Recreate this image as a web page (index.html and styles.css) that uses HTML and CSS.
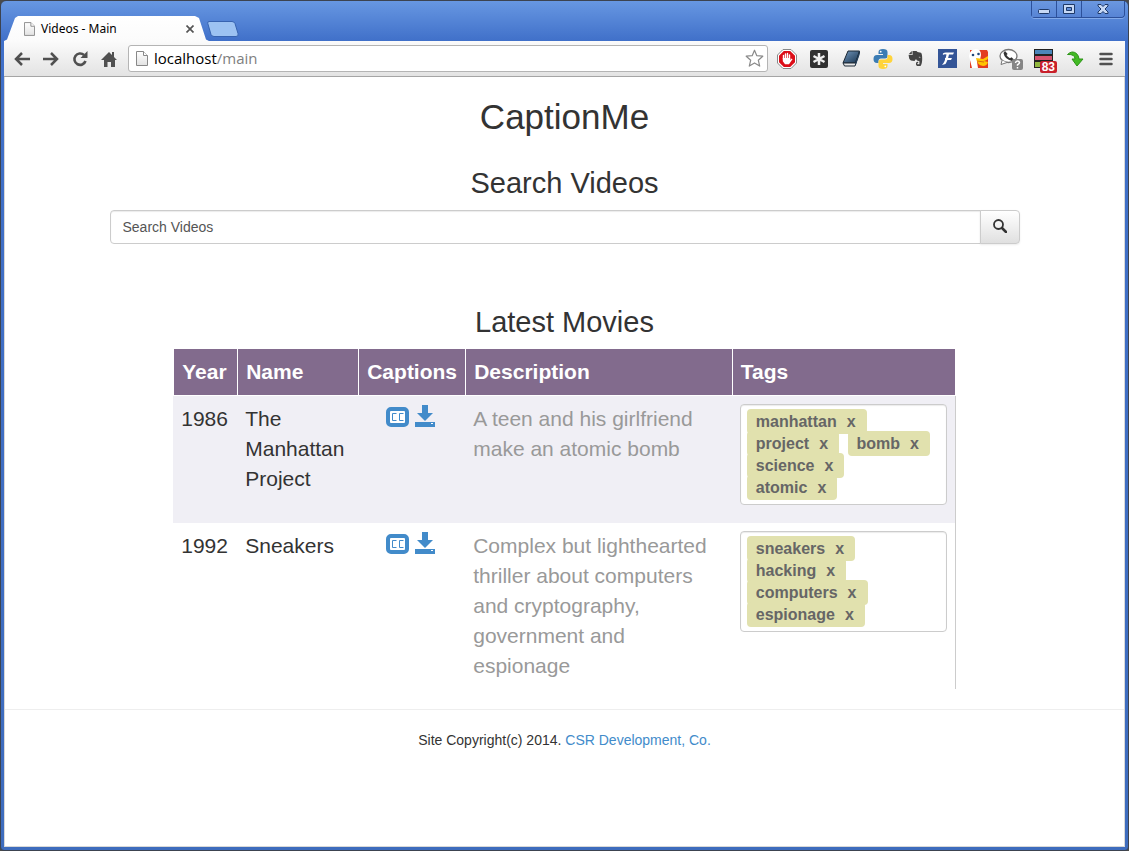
FILE: index.html
```html
<!DOCTYPE html>
<html lang="en">
<head>
<meta charset="utf-8">
<meta name="viewport" content="width=device-width, initial-scale=1">
<title>Videos - Main</title>
<link rel="stylesheet" href="styles.css">
</head>
<body>
<svg class="defs" width="0" height="0" aria-hidden="true">
  <defs>
    <linearGradient id="sheet" x1="0" y1="0" x2="0" y2="1"><stop offset="0" stop-color="#fff"/><stop offset="1" stop-color="#e2e2e2"/></linearGradient>
    <linearGradient id="book" x1="0" y1="0" x2="1" y2="1"><stop offset="0" stop-color="#7398bd"/><stop offset="1" stop-color="#17334f"/></linearGradient>
    <symbol id="page" viewBox="0 0 12 15"><path d="M.5.5h7l4 4v10H.5z" fill="url(#sheet)" stroke="#888"/><path d="M7.500.5v4h4" fill="#fff" stroke="#888"/></symbol>
    <symbol id="cc" viewBox="0 0 23 20"><rect x="2" y="2" width="19" height="16" rx="3" fill="#fff" stroke="#428bca" stroke-width="4"/><path d="M10.500 6.500h-4v7h4M17.500 6.500h-4v7h4" fill="none" stroke="#428bca" stroke-width="1"/></symbol>
    <symbol id="download" viewBox="0 0 20 22"><path fill="#428bca" d="M7 0h6v8h5l-8 8-8-8h5zM0 17h20v5H0z"/><path fill="#fff" d="M16 18h2v1h-2z"/></symbol>
  </defs>
</svg>
<div class="window">
  <header class="titlebar">
    <div class="tab">
      <svg width="11" height="14"><use href="#page"/></svg>
      <span class="tab-title">Videos - Main</span>
      <button class="plain tab-close" aria-label="Close tab"><svg width="8" height="8" viewBox="0 0 8 8"><path d="M.5.5l7 7M7.500.5l-7 7" stroke="#555" stroke-width="1.700"/></svg></button>
    </div>
    <button class="plain new-tab" aria-label="New tab"><svg width="32" height="17" viewBox="0 0 32 17"><path d="M2 .5h23q2 0 3 2l3 10q1 3-2 3H7q-2 0-3-2L.8 2.500Q.3.500 2 .500z" fill="#9cc2f2" stroke="#3763b0"/></svg></button>
    <div class="window-controls">
      <button class="control" aria-label="Minimize"><svg width="12" height="12" viewBox="0 0 12 12"><rect x=".5" y="6.500" width="11" height="4" rx="1" fill="#c6d8f5" stroke="#1e3968"/></svg></button>
      <button class="control" aria-label="Maximize"><svg width="12" height="12" viewBox="0 0 12 12"><path d="M.5 1.500h11v9H.5zM3.500 4.500v3h5v-3z" fill-rule="evenodd" fill="#c6d8f5" stroke="#1e3968"/></svg></button>
      <button class="control control-close" aria-label="Close"><svg width="12" height="12" viewBox="0 0 12 12"><path d="M1 1.500h3l2 2 2-2h3v1.500L8 6l3 3v1.500H8l-2-2-2 2H1V9l3-3-3-3z" fill="#c6d8f5" stroke="#1e3968"/></svg></button>
    </div>
  </header>

  <nav class="toolbar" aria-label="Browser">
    <button class="plain nav-button" aria-label="Back"><svg width="16" height="14" viewBox="0 0 16 14"><path d="M8 1L2 7l6 6M2 7h14" fill="none" stroke="#505050" stroke-width="2.500"/></svg></button>
    <button class="plain nav-button" aria-label="Forward"><svg width="16" height="14" viewBox="0 0 16 14"><path d="M8 1l6 6-6 6M14 7H0" fill="none" stroke="#505050" stroke-width="2.500"/></svg></button>
    <button class="plain nav-button" aria-label="Reload"><svg width="16" height="16" viewBox="0 0 16 16"><path d="M12 4a5.700 5.700 0 1 0 1.500 6" fill="none" stroke="#505050" stroke-width="2.600"/><path d="M15.500 0v7h-7z" fill="#505050"/></svg></button>
    <button class="plain nav-button" aria-label="Home"><svg width="16" height="16" viewBox="0 0 16 16"><path d="M8 1l3 3V1h2v5l3 3h-2v7h-4v-5H6.500v5H3V9H0z" fill="#505050"/></svg></button>
    <div class="address">
      <svg width="12" height="15"><use href="#page"/></svg>
      <span class="url">localhost<span class="url-path">/main</span></span>
      <button class="plain" aria-label="Bookmark"><svg width="19" height="19" viewBox="0 0 19 19"><path d="M9.500 1.200l2.300 5.500 6 .500-4.500 4 1.400 5.900-5.200-3.200-5.200 3.200 1.400-5.900-4.500-4 6-.500z" fill="#fff" stroke="#8a8a8a" stroke-width="1.200" stroke-linejoin="round"/></svg></button>
    </div>
    <button class="plain extension" aria-label="Ad blocker"><svg width="20" height="20" viewBox="0 0 20 20"><path d="M6 .5h8L19.500 6v8L14 19.500H6L.5 14V6z" fill="#fff" stroke="#888"/><path d="M6.800 2h6.400L18 6.800v6.400L13.200 18H6.800L2 13.200V6.800z" fill="#dc0d17"/><path d="M6.500 10V6.500M8.500 10V5M10.500 10V4.500M12.500 10V6" stroke="#fff" stroke-width="1.400" stroke-linecap="round"/><path d="M5.800 9h7.400v2l1.500-1.500.8.800-3.500 5H8l-2.200-3z" fill="#fff"/></svg></button>
    <button class="plain extension" aria-label="Notes"><svg width="18" height="18" viewBox="0 0 18 18"><rect width="18" height="18" rx="2" fill="#303030"/><path d="M9 3v12M3.500 6l11 6M14.500 6l-11 6" stroke="#eee" stroke-width="2.500"/></svg></button>
    <button class="plain extension" aria-label="Dictionary"><svg width="18" height="18" viewBox="0 0 18 18"><path d="M6 1h11.500l-4 12H1z" fill="url(#book)" stroke="#1d2935"/><path d="M1 13l1.500 3H13l4.500-14-4 11z" fill="#e7e7e7" stroke="#1d2935"/><path d="M13.500 13l4-12v4l-4 11z" fill="#22405e"/></svg></button>
    <button class="plain extension" aria-label="Python"><svg width="20" height="20" viewBox="0 0 20 20"><path d="M5.500 3Q5.500 0 10 0t4.500 3v4q0 2.500-2.500 2.500H8Q5.500 9.500 5.500 12v2H4Q.5 14 .5 10T4 6h6V5H5.500z" fill="#3b7cb4"/><path d="M14.500 17q0 3-4.500 3t-4.500-3v-4q0-2.500 2.500-2.500h4q2.500 0 2.500-2.500V6H16q3.500 0 3.500 4T16 14h-6v1h4.500z" fill="#ffd43b"/><circle cx="7.700" cy="2.700" r=".9" fill="#fff"/><circle cx="12.300" cy="17.300" r=".9" fill="#fff"/></svg></button>
    <button class="plain extension" aria-label="Clipper"><svg width="15" height="17" viewBox="0 0 15 17"><path d="M4.500 1h4l1 1 3.500.7q1.200.8 1.200 6T12.500 16H9q-1.500-1-1-3 .6-1.500 2.200-1.300V13h-.8v1.200h2v-3L9 10.500 8 9 6.500 11Q2 11 1.200 8.500L.6 5h4z" fill="#454545"/><path d="M3.800 1v3.200H.6z" fill="#454545"/><path d="M10.500 7q1.500-1 2 1z" fill="#eee"/></svg></button>
    <button class="plain extension" aria-label="Fonts"><svg width="19" height="19" viewBox="0 0 19 19"><rect width="19" height="19" fill="#345597"/><path d="M5 6Q4 3.500 8 3.500h8l-1 2h-4Q9.500 12 7.500 15L4 16q3-3 4.500-10.500Q6 5 5 6zM7 9h7l-1 2H7z" fill="#fff"/></svg></button>
    <button class="plain extension" aria-label="Duck search"><svg width="20" height="20" viewBox="0 0 20 20"><path d="M1 1h17l1 2v16H1z" fill="#e33b20"/><path d="M0 7Q1 0 7 0q5 0 5 6l-1 5-3 2 1 6H3z" fill="#fff"/><path d="M7 9l7 1L19 7q1 4-4 5l4 1q-1 4-5 4-6-1-7-8z" fill="#ffc400"/><path d="M8 12l7 1" stroke="#d66a10"/><circle cx="4" cy="6" r="1.300" fill="#234779"/><circle cx="9.500" cy="5" r="1.300" fill="#234779"/></svg></button>
    <button class="plain extension" aria-label="Phone"><svg width="24" height="22" viewBox="0 0 24 22"><ellipse cx="9.500" cy="8" rx="8.500" ry="6.500" fill="#fff" stroke="#777" stroke-width="1.300"/><path d="M3 12.500l-1 4 6-2" fill="#fff" stroke="#777"/><path d="M6 3L4.500 5q1 6 8.500 8l2-1.500-2.500-2.300-1.500 1Q8.500 9 7.500 7L8.700 6z" fill="#333"/><rect x="13" y="11" width="11" height="11" rx="2" fill="#858585"/><path d="M16.500 15q.3-2 2-2t2 1.500q0 1-2 2.300v1M18.500 19v1.500" fill="none" stroke="#fff" stroke-width="1.500"/></svg></button>
    <button class="plain extension badge-host" aria-label="Feeds, 83 unread"><svg width="19" height="19" viewBox="0 0 19 19"><path fill="#222" d="M0 0h19v19H0z"/><path fill="#4c86bb" d="M1 1h17v4H1z"/><path fill="#d75370" d="M1 7h17v4H1z"/><path fill="#91b83f" d="M1 13h17v5H1z"/></svg><span class="badge">83</span></button>
    <button class="plain extension" aria-label="Downloads"><svg width="17" height="16" viewBox="0 0 17 16"><path d="M.5 3.500Q5-1 9.500 2.500 12 5 12 8h4l-6 7-5-7h3Q8 3 .5 3.500z" fill="#43ba25" stroke="#2c9417"/></svg></button>
    <button class="plain menu-button" aria-label="Menu"><svg width="14" height="14" viewBox="0 0 14 14"><path d="M1.500 2h11M1.500 7h11M1.500 12h11" stroke="#505050" stroke-width="2.500" stroke-linecap="round"/></svg></button>
  </nav>

  <div class="page">
    <main class="container">
      <h1>CaptionMe</h1>
      <h2>Search Videos</h2>
      <form class="search" role="search">
        <input class="search-field" type="text" placeholder="Search Videos" aria-label="Search Videos">
        <button class="search-button" type="button" aria-label="Search"><svg width="14" height="14" viewBox="0 0 14 14"><circle cx="5.500" cy="5.500" r="4.500" fill="none" stroke="#333" stroke-width="1.800"/><path d="M9 9l4 4" stroke="#333" stroke-width="2.500" stroke-linecap="round"/></svg></button>
      </form>
      <h2 class="latest">Latest Movies</h2>
      <table class="movies">
        <colgroup><col class="col-year"><col class="col-name"><col class="col-captions"><col><col class="col-tags"></colgroup>
        <thead><tr><th>Year</th><th>Name</th><th>Captions</th><th>Description</th><th>Tags</th></tr></thead>
        <tbody>
          <tr>
            <td>1986</td><td>The Manhattan Project</td>
            <td><div class="captions"><a href="#" aria-label="View captions"><svg width="23" height="20"><use href="#cc"/></svg></a><a href="#" aria-label="Download captions"><svg width="20" height="22"><use href="#download"/></svg></a></div></td>
            <td class="description">A teen and his girlfriend make an atomic bomb</td>
            <td><div class="tags">
              <span class="tag">manhattan<button class="remove" aria-label="Remove manhattan">x</button></span>
              <span class="tag">project<button class="remove" aria-label="Remove project">x</button></span>
              <span class="tag">bomb<button class="remove" aria-label="Remove bomb">x</button></span>
              <span class="tag">science<button class="remove" aria-label="Remove science">x</button></span>
              <span class="tag">atomic<button class="remove" aria-label="Remove atomic">x</button></span>
            </div></td>
          </tr>
          <tr>
            <td>1992</td><td>Sneakers</td>
            <td><div class="captions"><a href="#" aria-label="View captions"><svg width="23" height="20"><use href="#cc"/></svg></a><a href="#" aria-label="Download captions"><svg width="20" height="22"><use href="#download"/></svg></a></div></td>
            <td class="description">Complex but lighthearted thriller about computers and cryptography, government and espionage</td>
            <td><div class="tags">
              <span class="tag">sneakers<button class="remove" aria-label="Remove sneakers">x</button></span>
              <span class="tag">hacking<button class="remove" aria-label="Remove hacking">x</button></span>
              <span class="tag">computers<button class="remove" aria-label="Remove computers">x</button></span>
              <span class="tag">espionage<button class="remove" aria-label="Remove espionage">x</button></span>
            </div></td>
          </tr>
        </tbody>
      </table>
    </main>
    <footer class="footer">Site Copyright(c) 2014. <a href="#">CSR Development, Co.</a></footer>
  </div>
</div>
</body>
</html>
```

FILE: styles.css
```css
* { box-sizing: border-box; }

body {
  margin: 0;
  background: #4b4b4b;
  color: #333;
  font: 14px/20px "Liberation Sans", Arial, sans-serif;
}

svg { display: block; flex: none; }
.defs { position: absolute; }
a { color: #428bca; text-decoration: none; }

.plain {
  display: flex;
  align-items: center;
  justify-content: center;
  flex: none;
  padding: 0;
  border: 0;
  background: none;
}

/* Browser window */
.window {
  display: flex;
  flex-direction: column;
  min-height: 100vh;
  padding: 0 3px 3px;
  border: 1px solid #3c4350;
  border-radius: 6px 6px 4px 4px;
  background: linear-gradient(#6797e2, #4070c9 40px, #3e6cbd);
}

.titlebar {
  display: flex;
  align-items: flex-end;
  height: 40px;
}

.tab {
  display: flex;
  align-items: center;
  width: 205px;
  height: 25px;
  padding: 0 15px 0 20px;
  background: linear-gradient(#fff, #fbfbfb);
  clip-path: polygon(0 100%, 3px 94%, 11px 8%, 14px 0, 191px 0, 195px 8%, 202px 94%, 100% 100%);
  color: #000;
  font: 12px/20px "Noto Sans", sans-serif;
}

.tab-title { flex: 1; padding-left: 6px; }
.new-tab { margin-left: -2px; padding-bottom: 3px; }

.window-controls {
  display: flex;
  align-self: flex-start;
  margin-left: auto;
  border: 1px solid #2c509a;
  border-top: 0;
  border-radius: 0 0 4px 4px;
  box-shadow: 0 1px 0 #83aaea;
}

.control {
  display: flex;
  align-items: center;
  justify-content: center;
  width: 25px;
  height: 16px;
  padding: 0;
  border: 0;
  border-right: 1px solid #2c509a;
  background: linear-gradient(#6b98e0, #5784d5);
}

.control-close { width: 42px; border-right: 0; border-radius: 0 0 4px; }

.toolbar {
  display: flex;
  align-items: center;
  height: 36px;
  padding: 0 4px 0 3px;
  border-bottom: 1px solid #a5a5a5;
  background: linear-gradient(#fbfbfb, #e3e3e3);
}

.nav-button { width: 29px; height: 28px; }

.address {
  display: flex;
  align-items: center;
  flex: 1;
  min-width: 0;
  height: 27px;
  margin: 0 3px 0 5px;
  padding: 0 3px 0 7px;
  border: 1px solid #b4b4b4;
  border-radius: 3px;
  background: #fff;
}

.url {
  flex: 1;
  padding: 0 0 2px 6px;
  color: #000;
  font: 15px/20px "Open Sans", sans-serif;
}

.url-path { color: #808080; }
.extension { width: 32px; height: 28px; }
.menu-button { width: 30px; height: 28px; }
.badge-host { position: relative; }

.badge {
  position: absolute;
  right: 2px;
  bottom: 0;
  padding: 0 2px;
  border-radius: 2px;
  background: #c9202b;
  color: #fff;
  font: bold 12px/12px "Liberation Sans", Arial, sans-serif;
}

/* Page */
.page {
  flex: 1;
  border: 1px solid #d8d8d8;
  border-top: 0;
  background: #fff;
}

.container {
  max-width: 940px;
  margin: 0 auto;
  padding: 20px 15px;
}

h1, h2 {
  margin: 0;
  font-weight: 500;
  text-align: center;
}

h1 { margin-bottom: 30px; font-size: 35px; line-height: 40px; }
h2 { margin-bottom: 10px; font-size: 29px; line-height: 33px; }

.search { display: flex; }

.search-field {
  flex: 1;
  min-width: 0;
  height: 34px;
  padding: 6px 12px;
  border: 1px solid #ccc;
  border-radius: 4px 0 0 4px;
  box-shadow: inset 0 1px 1px rgba(0, 0, 0, .08);
  color: #555;
  font: inherit;
}

.search-field::placeholder { color: #555; opacity: 1; }

.search-button {
  display: flex;
  align-items: center;
  justify-content: center;
  width: 40px;
  margin-left: -1px;
  padding: 0 0 2px;
  border: 1px solid #ccc;
  border-radius: 0 4px 4px 0;
  background: linear-gradient(#fff, #e0e0e0);
  box-shadow: 0 1px 2px rgba(0, 0, 0, .08);
}

.latest { margin-top: 62px; }

.movies {
  width: 86%;
  margin: 0 auto;
  table-layout: fixed;
  border-spacing: 0;
  font-size: 21px;
  line-height: 30px;
}

.col-year { width: 64px; }
.col-name { width: 121px; }
.col-captions { width: 107px; }
.col-tags { width: 224px; }

th {
  padding: 8px 0 8px 8px;
  border-left: 1px solid #fff;
  border-bottom: 1px solid #fff;
  background: #826b8d;
  color: #fff;
  text-align: left;
}

th:last-child { border-right: 1px solid #fff; }
td { padding: 8px; vertical-align: top; }
td:last-child { border-right: 1px solid #ccc; }
tbody tr:nth-child(odd) { background: #f0eff5; }
.description { color: #999; }

.captions {
  display: flex;
  align-items: flex-end;
  justify-content: center;
  gap: 6px;
  padding: 1px 2px 0 0;
}

.tags {
  margin-bottom: 10px;
  padding: 6px 6px 5px;
  border: 1px solid #ccc;
  border-radius: 4px;
  background: #fff;
  box-shadow: inset 0 1px 1px rgba(0, 0, 0, .08);
  font-size: 16px;
  line-height: 22px;
}

.tag {
  margin-right: 4px;
  padding: 4px 9px;
  border-radius: 4px;
  background: #e1e1ae;
  color: #666;
  font-weight: bold;
  white-space: nowrap;
}

.remove {
  margin-left: 8px;
  padding: 0 2px;
  border: 0;
  background: none;
  color: inherit;
  font: inherit;
  line-height: 18px;
}

.footer {
  padding: 20px;
  border-top: 1px solid #eee;
  text-align: center;
}
```
